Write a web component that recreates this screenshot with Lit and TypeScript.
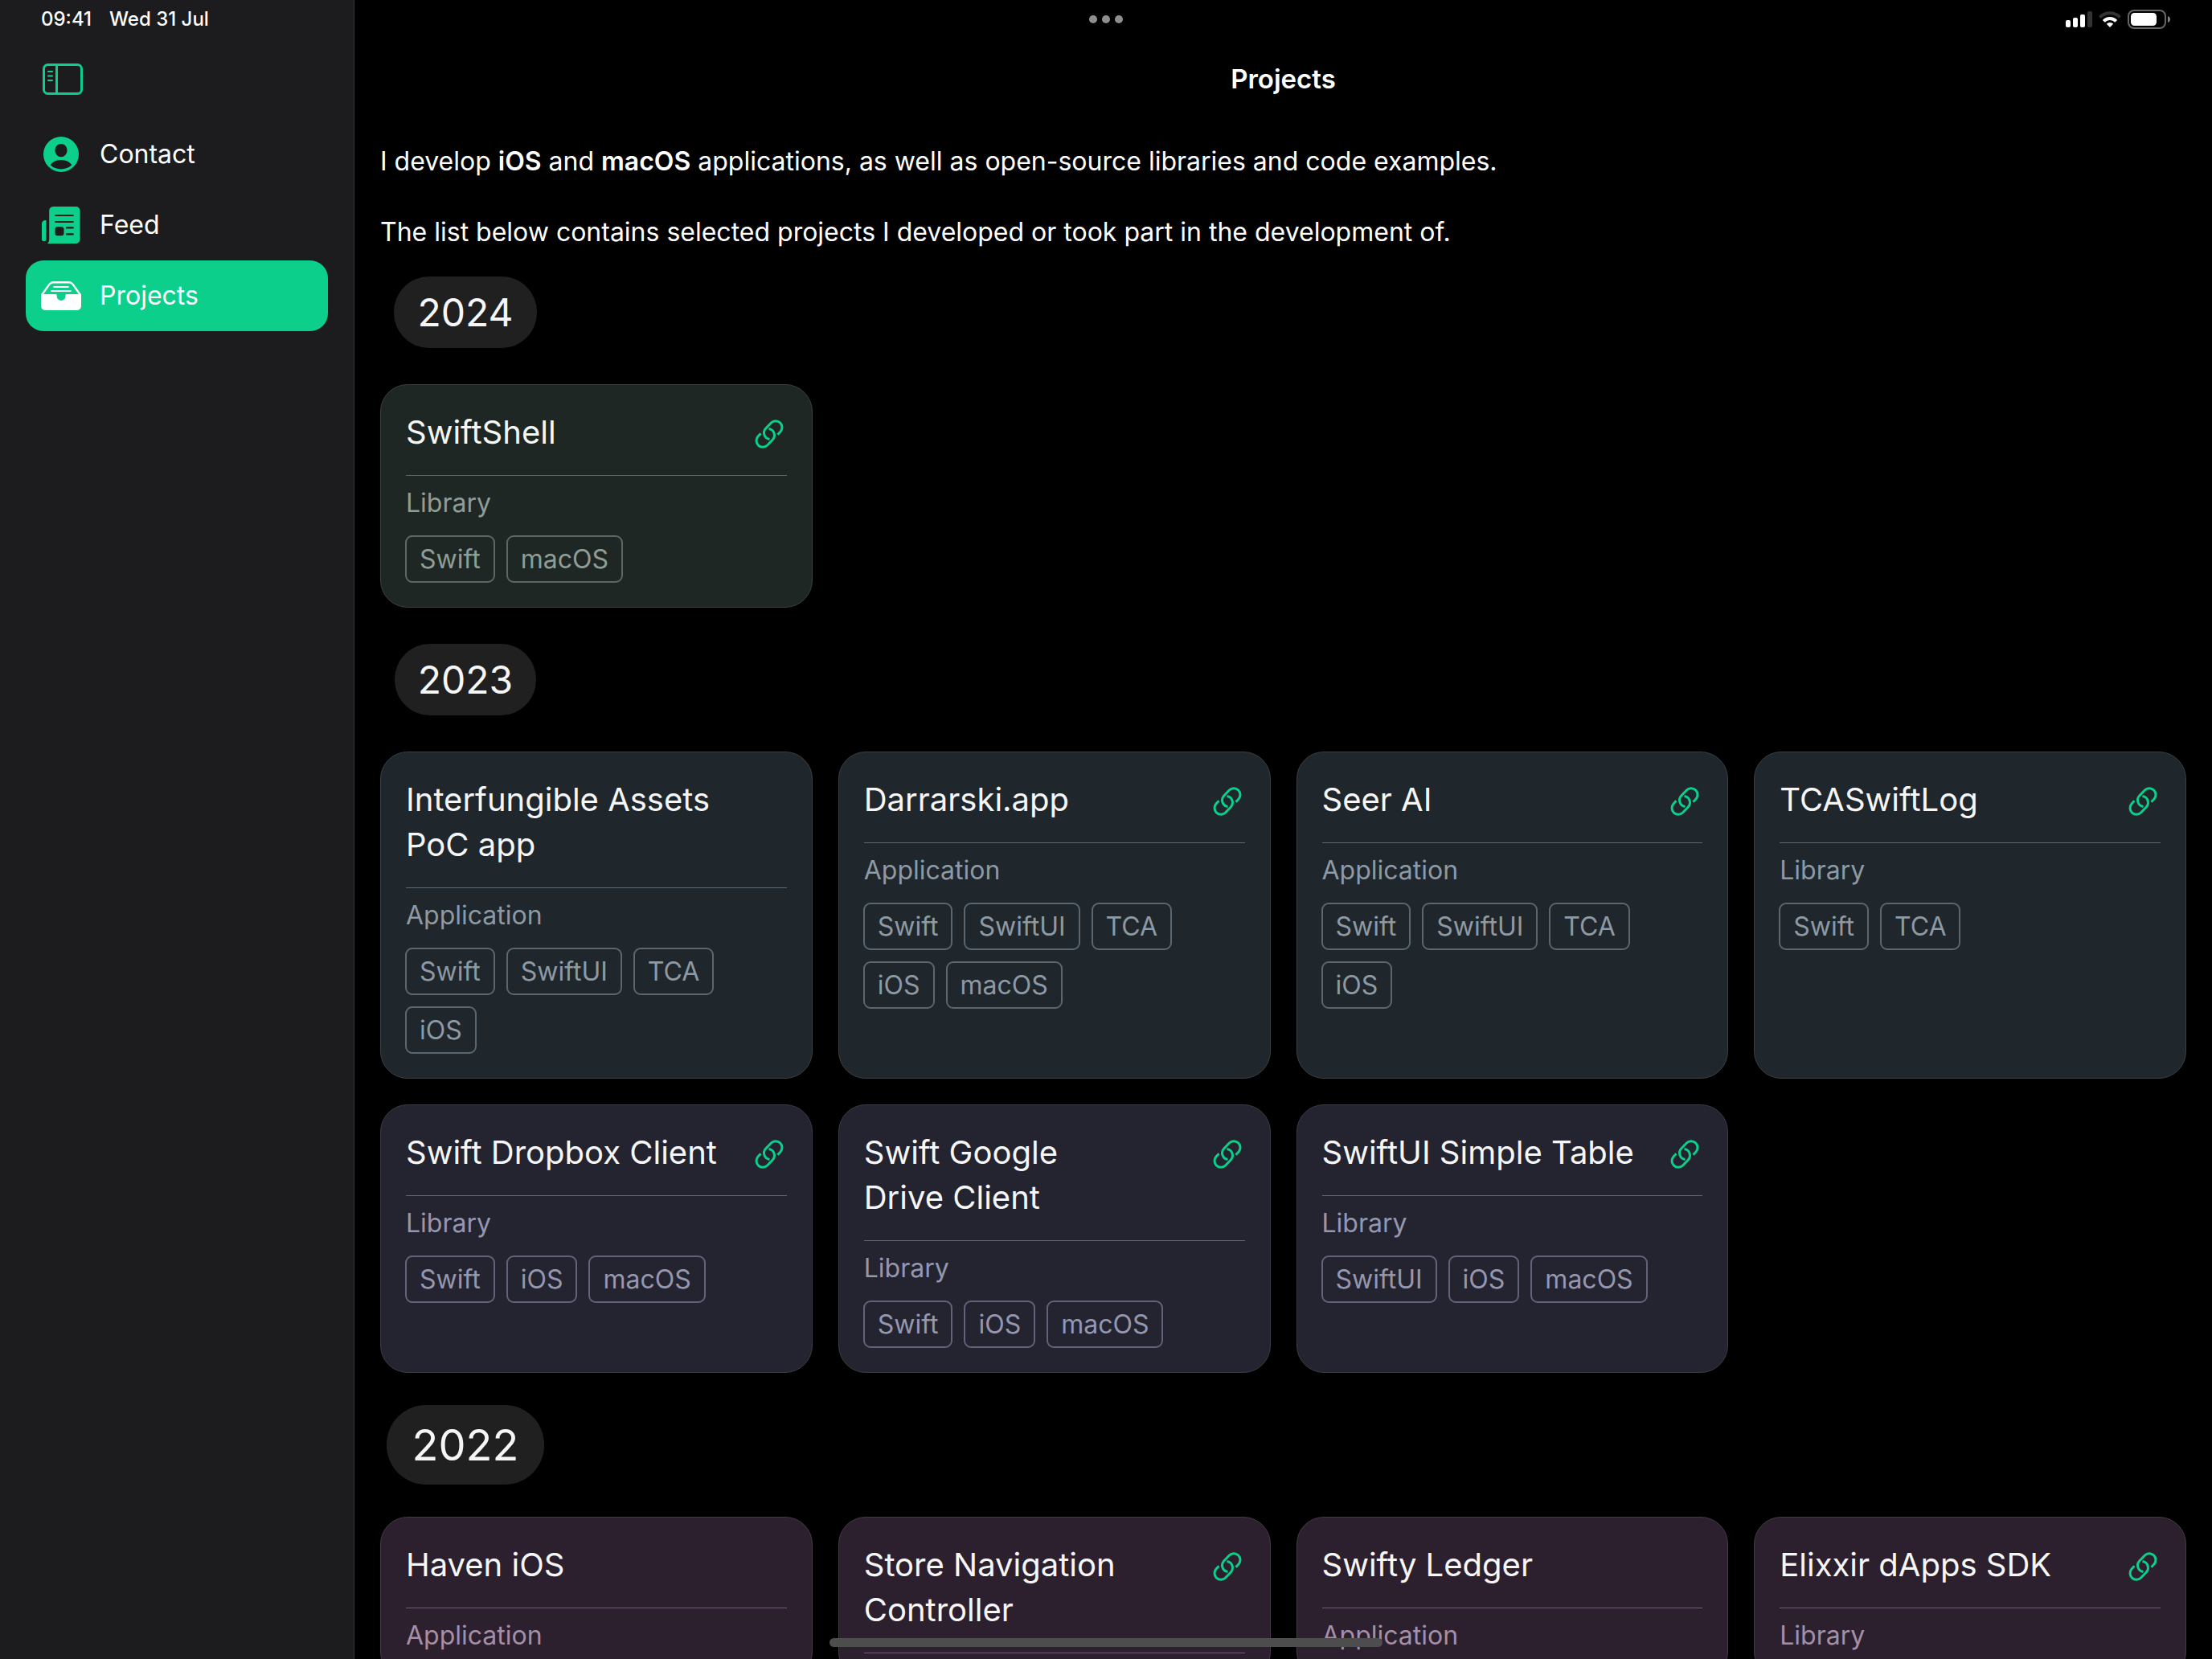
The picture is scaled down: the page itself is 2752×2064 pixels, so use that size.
import { LitElement, html, svg, css, nothing } from "lit";
import { customElement, property } from "lit/decorators.js";
import { classMap } from "lit/directives/class-map.js";

interface Project {
  name: string;
  kind?: string;
  tags?: string[];
  href?: string;
}

interface Row {
  tone: string;
  projects: Project[];
}

interface Year {
  year: string;
  large?: boolean;
  rows: Row[];
}

const YEARS: Year[] = [
  {
    year: "2024",
    rows: [
      {
        tone: "green",
        projects: [{ name: "SwiftShell", kind: "Library", tags: ["Swift", "macOS"], href: "#swiftshell" }],
      },
    ],
  },
  {
    year: "2023",
    rows: [
      {
        tone: "teal",
        projects: [
          { name: "Interfungible Assets\nPoC app", kind: "Application", tags: ["Swift", "SwiftUI", "TCA", "iOS"] },
          { name: "Darrarski.app", kind: "Application", tags: ["Swift", "SwiftUI", "TCA", "iOS", "macOS"], href: "#darrarski" },
          { name: "Seer AI", kind: "Application", tags: ["Swift", "SwiftUI", "TCA", "iOS"], href: "#seer" },
          { name: "TCASwiftLog", kind: "Library", tags: ["Swift", "TCA"], href: "#tcaswiftlog" },
        ],
      },
      {
        tone: "indigo",
        projects: [
          { name: "Swift Dropbox Client", kind: "Library", tags: ["Swift", "iOS", "macOS"], href: "#dropbox" },
          { name: "Swift Google\nDrive Client", kind: "Library", tags: ["Swift", "iOS", "macOS"], href: "#drive" },
          { name: "SwiftUI Simple Table", kind: "Library", tags: ["SwiftUI", "iOS", "macOS"], href: "#table" },
        ],
      },
    ],
  },
  {
    year: "2022",
    large: true,
    rows: [
      {
        tone: "plum",
        projects: [
          { name: "Haven iOS", kind: "Application" },
          { name: "Store Navigation\nController", href: "#store" },
          { name: "Swifty Ledger", kind: "Application" },
          { name: "Elixxir dApps SDK", kind: "Library", href: "#elixxir" },
        ],
      },
    ],
  },
];

const contactIcon = svg`<svg width="44" height="44" viewBox="0 0 44 44" aria-hidden="true">
  <path fill="currentColor" fill-rule="evenodd" d="M22 0a22 22 0 1 1 0 44a22 22 0 1 1 0-44zM22 9c-4.3 0-7.5 3.500-7.500 8s3.200 8.300 7.500 8.300s7.500-3.800 7.500-8.300s-3.200-8-7.500-8zM22 29c-6.200 0-11 2.800-13.300 6.300c3.300 3.300 8 5.200 13.300 5.200s10-1.900 13.300-5.200c-2.300-3.500-7.100-6.300-13.300-6.300z"/>
</svg>`;

const feedIcon = svg`<svg width="48" height="46" viewBox="0 0 48 46" aria-hidden="true">
  <path fill="currentColor" d="M5.500 17v23.500a2.700 2.700 0 0 1-5.500 0V21.500q0-4 4-4.500z"/>
  <path fill="currentColor" fill-rule="evenodd" d="M14 0h28.500a5 5 0 0 1 5 5v35.500a5.500 5.500 0 0 1-5.500 5.500H7q2.200-1.500 2.200-5V5a5 5 0 0 1 4.800-5zM19.500 25.300a3 3 0 0 0-3 3v5a3 3 0 0 0 3 3h5a3 3 0 0 0 3-3v-5a3 3 0 0 0-3-3z"/>
  <path class="cut" fill="none" stroke-width="2.200" stroke-linecap="round" d="M17.300 11h21.500M17.300 19h21.500M31 26.400h7.800M31 34.400h7.800"/>
</svg>`;

const trayIcon = svg`<svg width="50" height="36" viewBox="0 0 50 36" aria-hidden="true">
  <path fill="none" stroke="currentColor" stroke-width="2.400" stroke-linejoin="round" d="M1.300 18V16.500L10.500 3.600Q12.300 1.200 15 1.200H35Q37.700 1.200 39.500 3.600L48.700 16.500V18"/>
  <path fill="none" stroke="currentColor" stroke-width="2.200" stroke-linecap="round" d="M16.300 7h17.400M13.300 12h23.400"/>
  <path fill="currentColor" d="M0 16h18.500q1.200 0 1.200 1.500v1a5.400 5.400 0 0 0 10.800 0v-1q0-1.500 1.200-1.500H50v14.500a5.500 5.500 0 0 1-5.500 5.500H5.500A5.500 5.500 0 0 1 0 30.500z"/>
</svg>`;

@customElement("project-card")
export class ProjectCard extends LitElement {
  @property({ attribute: false }) project!: Project;
  @property({ reflect: true }) tone = "green";

  static styles = css`
    :host {
      display: block;
      box-sizing: border-box;
      padding: 31px;
      border: 1px solid #3a4040;
      border-radius: 34px;
      background: var(--card);
      --card: #1f2724;
      --line: #5a6a63;
      --dim: #8f9d97;
    }
    :host([tone="teal"]) {
      --card: #1f262c;
      --line: #5a6770;
      --dim: #8d99a3;
    }
    :host([tone="indigo"]) {
      --card: #232430;
      --line: #62637a;
      --dim: #9697ae;
      border-color: #3c3b45;
    }
    :host([tone="plum"]) {
      --card: #2d202e;
      --line: #715d74;
      --dim: #a48fa6;
      border-color: #443a45;
    }
    .head {
      display: flex;
      align-items: flex-start;
      justify-content: space-between;
      padding-bottom: 25px;
      border-bottom: 1px solid var(--line);
    }
    .name {
      margin: 0;
      font-size: 40px;
      font-weight: 400;
      line-height: 56px;
      color: #f6f6f6;
      white-space: pre;
    }
    .link {
      display: block;
      margin: 12px 4px 0 0;
      color: #0bcf8b;
    }
    .link svg {
      display: block;
    }
    .kind {
      margin: 12px 0 0;
      font-size: 32px;
      line-height: 44px;
      color: var(--dim);
    }
    .tags {
      display: flex;
      flex-wrap: wrap;
      gap: 14px;
      margin: 18px -1px -1px;
      padding: 0;
      list-style: none;
    }
    .tag {
      padding: 6px 16px 5px;
      border: 2px solid var(--line);
      border-radius: 9px;
      font-size: 32px;
      line-height: 44px;
      color: var(--dim);
    }
  `;

  render() {
    const { name, kind, tags, href } = this.project;
    return html`
      <div class="head">
        <h3 class="name">${name}</h3>
        ${href
          ? html`<a class="link" href=${href} aria-label="Open project">
              <svg width="36" height="36" viewBox="0 0 36 36" fill="none" stroke="currentColor" stroke-width="3" aria-hidden="true">
                <path d="M28.500 18.700L32 15A8 8 0 0 0 20.400 4L13.700 11A8 8 0 0 0 18.500 24.400" />
                <path d="M7.500 17.300L4 21A8 8 0 0 0 15.600 32L22.300 25A8 8 0 0 0 17.500 11.600" />
              </svg>
            </a>`
          : nothing}
      </div>
      ${kind ? html`<p class="kind">${kind}</p>` : nothing}
      ${tags
        ? html`<ul class="tags">
            ${tags.map((t) => html`<li class="tag">${t}</li>`)}
          </ul>`
        : nothing}
    `;
  }
}

@customElement("status-bar")
export class StatusBar extends LitElement {
  static styles = css`
    :host {
      display: grid;
      grid-template-columns: 1fr auto 1fr;
      align-items: center;
      height: 48px;
      padding: 0 51px;
      font-size: 24px;
      font-weight: 500;
      color: #fff;
    }
    .clock {
      display: flex;
      gap: 22px;
    }
    .dots {
      display: flex;
      gap: 6px;
    }
    .dot {
      width: 10px;
      height: 10px;
      border-radius: 50%;
      background: #8e8e8e;
    }
    .signals {
      display: flex;
      justify-content: flex-end;
      align-items: center;
      gap: 8px;
    }
  `;

  render() {
    return html`
      <div class="clock"><span>09:41</span><span>Wed 31 Jul</span></div>
      <div class="dots"><span class="dot"></span><span class="dot"></span><span class="dot"></span></div>
      <div class="signals">
        <svg width="33" height="20" viewBox="0 0 33 20" role="img" aria-label="Signal">
          <g fill="#fff">
            <rect y="11" width="6" height="9" rx="2" />
            <rect x="9" y="8" width="6" height="12" rx="2" />
            <rect x="18" y="4" width="6" height="16" rx="2" />
          </g>
          <rect x="27" width="6" height="20" rx="2" fill="#333" />
        </svg>
        <svg width="28" height="20" viewBox="0 0 28 20" role="img" aria-label="Wi-Fi" fill="none" stroke-width="4">
          <path stroke="#333" d="M1.500 7.500A17.500 17.500 0 0 1 26.500 7.500" />
          <path stroke="#fff" d="M6.300 12.300A10.800 10.800 0 0 1 21.700 12.300" />
          <path fill="#fff" d="M14 20L9.800 15.800A6 6 0 0 1 18.200 15.800Z" />
        </svg>
        <svg width="54" height="24" viewBox="0 0 54 24" role="img" aria-label="Battery">
          <rect x="1" y="1" width="46" height="22" rx="7" fill="none" stroke="#666" stroke-width="2" />
          <rect x="4" y="4" width="32" height="16" rx="4.500" fill="#fff" />
          <path d="M50 8Q53 9 53 12T50 16Z" fill="#808080" />
        </svg>
      </div>
    `;
  }
}

@customElement("app-root")
export class AppRoot extends LitElement {
  static styles = css`
    :host {
      display: block;
      position: relative;
      height: 100vh;
      overflow: hidden;
      background: #000;
      color: #fff;
      font-family: Inter, "Liberation Sans", sans-serif;
      font-size: 32px;
      line-height: 44px;
    }
    .status {
      position: absolute;
      inset: 0 0 auto;
    }
    .layout {
      display: grid;
      grid-template-columns: 441px 1fr;
      height: 100%;
    }
    .sidebar {
      box-sizing: border-box;
      padding: 78px 32px 0;
      border-right: 1px solid #38383a;
      background: #1c1c1e;
    }
    .toggle {
      display: block;
      margin: 0 0 30px 20px;
      padding: 0;
      border: 0;
      background: none;
      color: #0bcf8b;
    }
    .toggle svg {
      display: block;
    }
    .item {
      display: flex;
      align-items: center;
      gap: 20px;
      box-sizing: border-box;
      height: 88px;
      padding: 0 16px;
      border-radius: 22px;
      color: #fff;
      text-decoration: none;
    }
    .icon {
      display: grid;
      place-items: center;
      width: 56px;
      color: #0bcf8b;
    }
    .cut {
      stroke: #1c1c1e;
    }
    .item.active {
      background: #0bcf8b;
    }
    .active .icon {
      color: #fff;
    }
    .main {
      box-sizing: border-box;
      min-width: 0;
      overflow: hidden;
      padding: 76px 32px 0;
    }
    .title {
      margin: 0;
      font-size: 33px;
      font-weight: 600;
      line-height: 44px;
      text-align: center;
    }
    .intro {
      margin: 59px 0 0;
    }
    .intro + .intro {
      margin-top: 44px;
    }
    .intro b {
      font-weight: 600;
    }
    .year {
      display: grid;
      place-items: center;
      width: 212px;
      height: 99px;
      margin: 40px 0;
      font-weight: 400;
    }
    .intro + .year {
      margin-top: 28px;
    }
    .pill {
      padding: 0 29px;
      border-radius: 44px;
      background: #202020;
      color: #f6f6f6;
      font-size: 48px;
      line-height: 89px;
    }
    .pill.large {
      padding: 0 32px;
      border-radius: 49px;
      font-size: 54px;
      line-height: 99px;
    }
    .row {
      display: grid;
      grid-template-columns: repeat(4, 1fr);
      gap: 32px;
    }
    .row + .row {
      margin-top: 32px;
    }
    .home {
      position: absolute;
      left: 50%;
      bottom: 15px;
      width: 25%;
      height: 11px;
      border-radius: 6px;
      background: #4d4d4d;
      transform: translateX(-50%);
    }
  `;

  render() {
    return html`
      <div class="layout">
        <nav class="sidebar">
          <button class="toggle" aria-label="Toggle sidebar">
            <svg width="52" height="40" viewBox="0 0 52 40" fill="none" stroke="currentColor" aria-hidden="true">
              <rect x="2.500" y="2.500" width="47" height="36" rx="5" stroke-width="3" />
              <path d="M18.500 2v37" stroke-width="3" />
              <path d="M8 11h5M8 16.500h5M8 22h5" stroke-width="2.200" stroke-linecap="round" />
            </svg>
          </button>
          <a class="item" href="#contact"><span class="icon">${contactIcon}</span>Contact</a>
          <a class="item" href="#feed"><span class="icon">${feedIcon}</span>Feed</a>
          <a class="item active" href="#projects" aria-current="page"><span class="icon">${trayIcon}</span>Projects</a>
        </nav>
        <main class="main">
          <h1 class="title">Projects</h1>
          <p class="intro">
            I develop <b>iOS</b> and <b>macOS</b> applications, as well as open-source libraries and code examples.
          </p>
          <p class="intro">The list below contains selected projects I developed or took part in the development of.</p>
          ${YEARS.map(
            (y) => html`
              <h2 class="year"><span class=${classMap({ pill: true, large: !!y.large })}>${y.year}</span></h2>
              ${y.rows.map(
                (r) => html`<div class="row">
                  ${r.projects.map((p) => html`<project-card .project=${p} tone=${r.tone}></project-card>`)}
                </div>`
              )}
            `
          )}
        </main>
      </div>
      <status-bar class="status"></status-bar>
      <div class="home"></div>
    `;
  }
}
